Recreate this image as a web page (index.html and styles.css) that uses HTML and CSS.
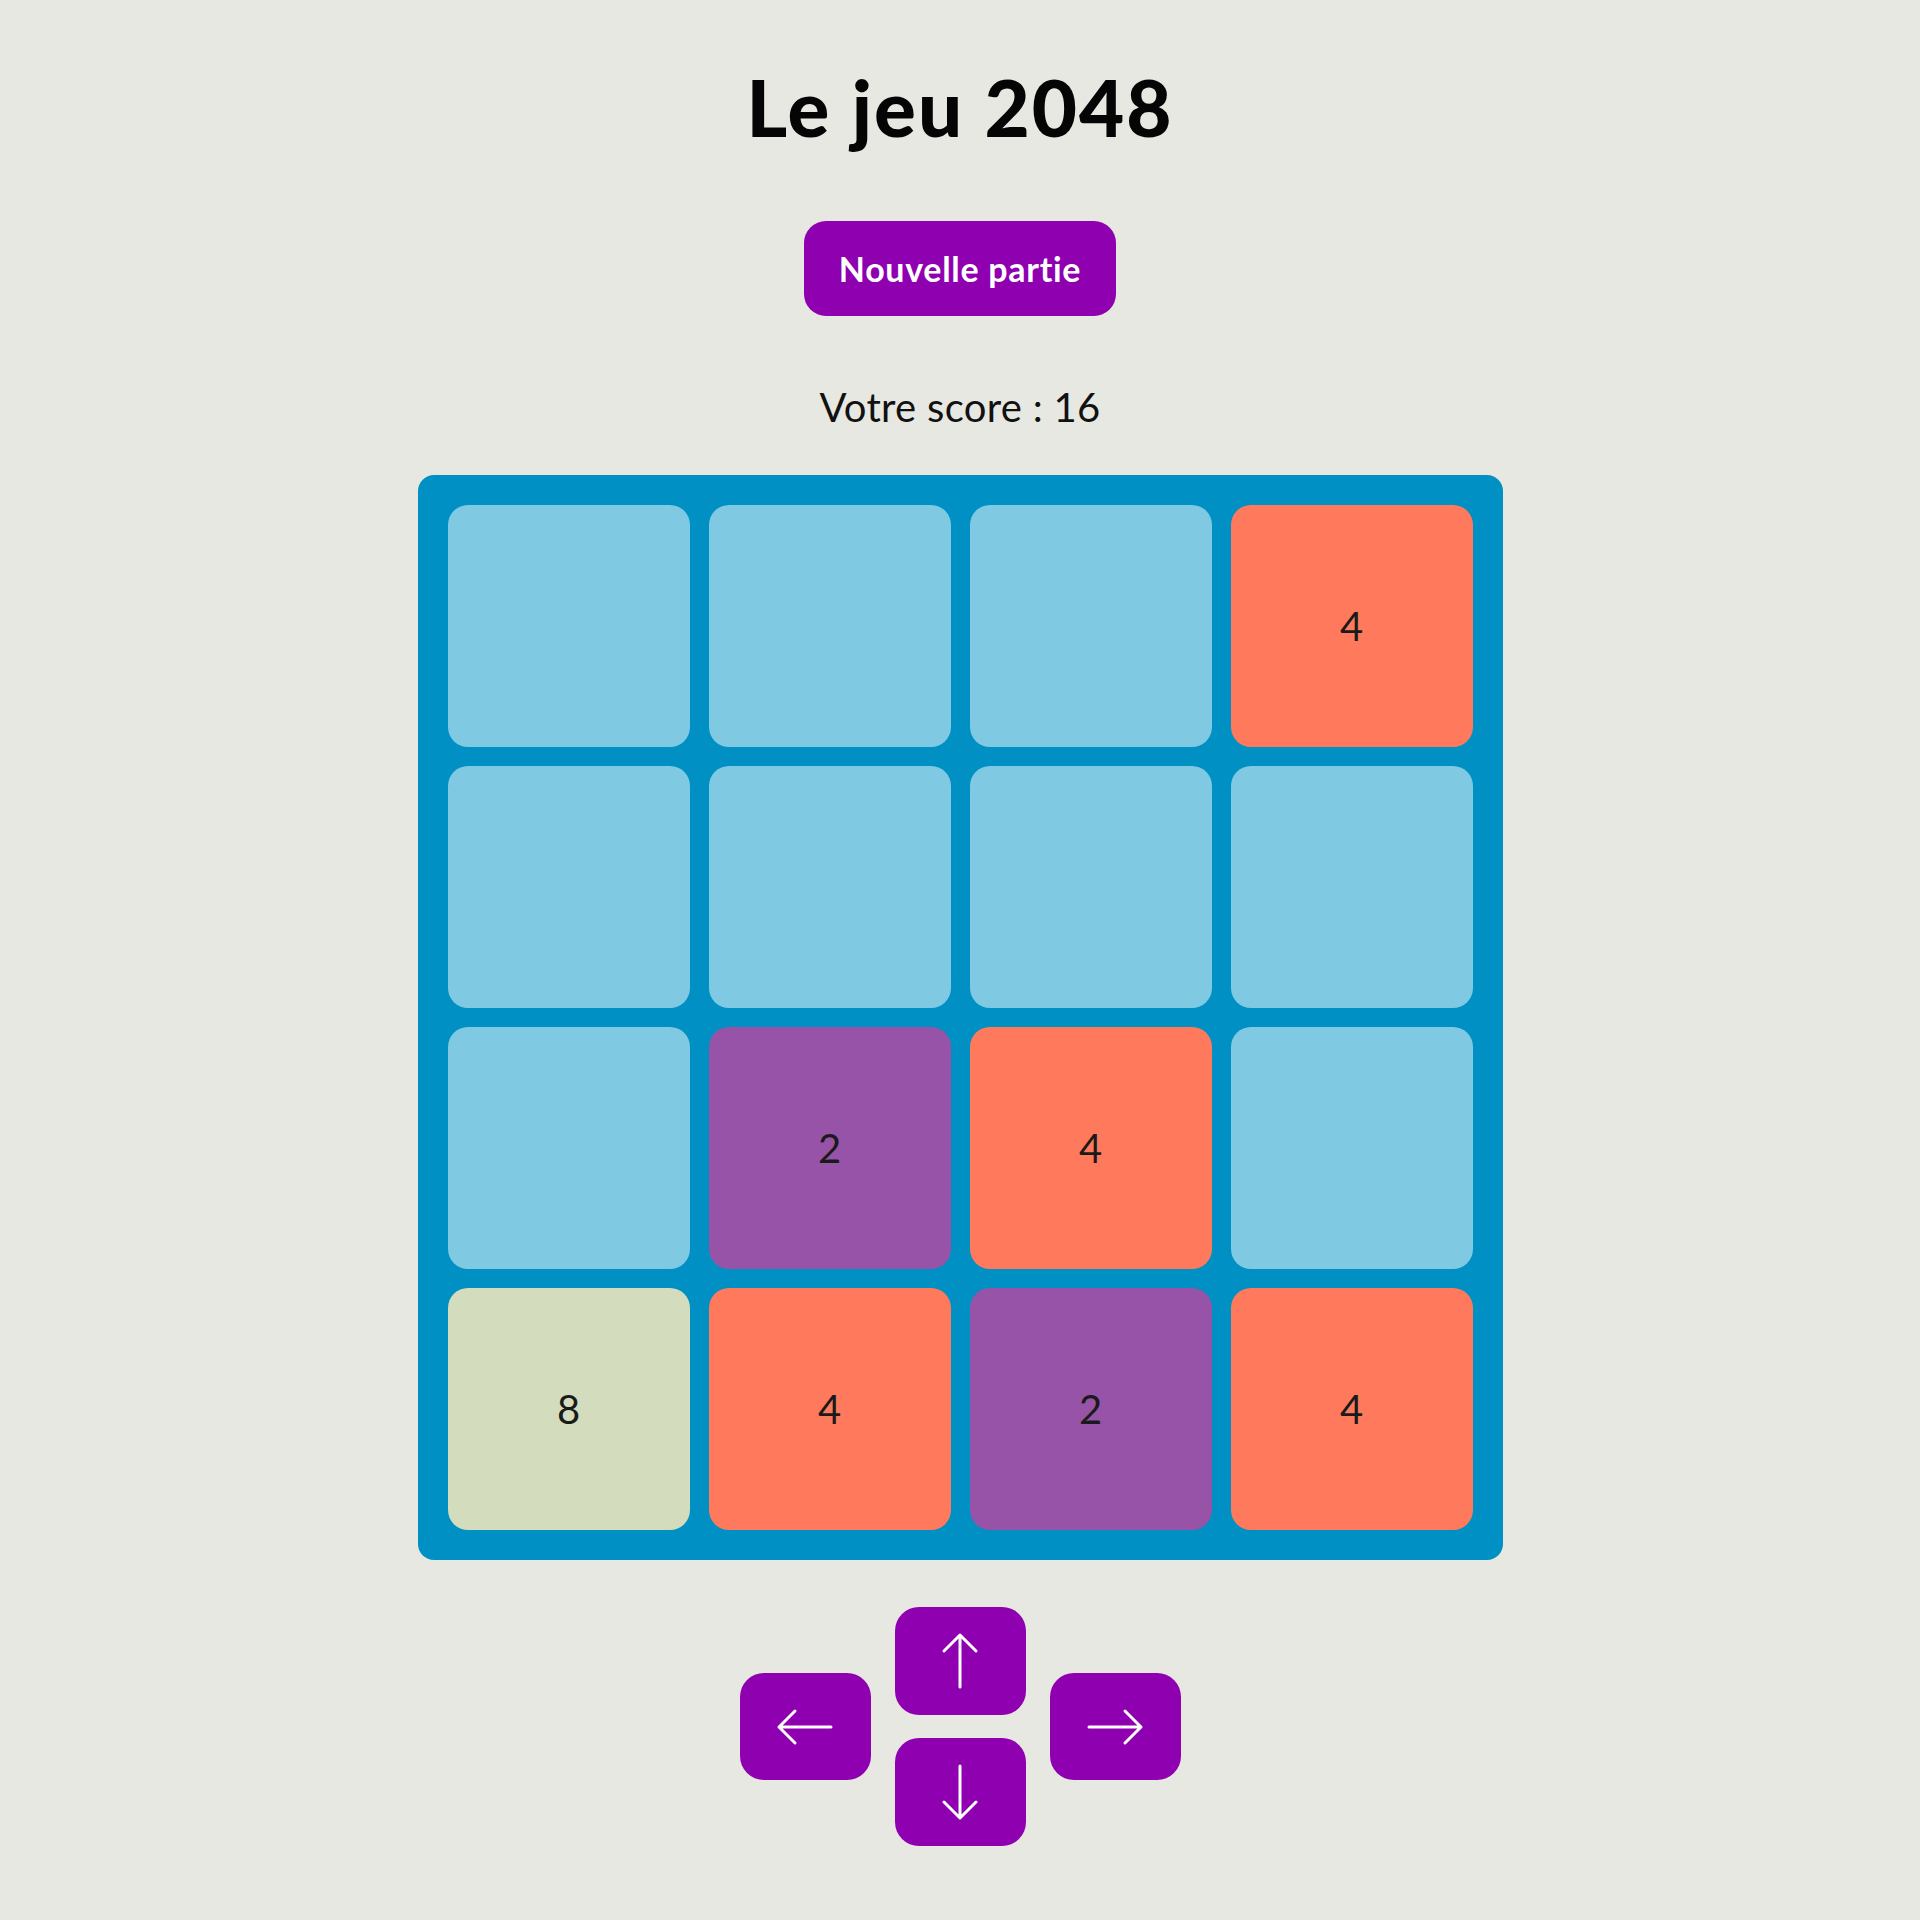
FILE: index.html
```html
<!DOCTYPE html>
<html lang="fr">
<head>
<meta charset="utf-8">
<title>Le jeu 2048</title>
<link rel="stylesheet" href="styles.css">
</head>
<body>
<main class="page">
  <h1 class="title">Le jeu 2048</h1>
  <button class="new-game">Nouvelle partie</button>
  <p class="score">Votre score : 16</p>
  <div class="board">
    <div class="tile"></div>
    <div class="tile"></div>
    <div class="tile"></div>
    <div class="tile t4">4</div>
    <div class="tile"></div>
    <div class="tile"></div>
    <div class="tile"></div>
    <div class="tile"></div>
    <div class="tile"></div>
    <div class="tile t2">2</div>
    <div class="tile t4">4</div>
    <div class="tile"></div>
    <div class="tile t8">8</div>
    <div class="tile t4">4</div>
    <div class="tile t2">2</div>
    <div class="tile t4">4</div>
  </div>
  <div class="controls">
    <button class="arrow left" aria-label="gauche"><svg viewBox="0 0 60 60" width="60" height="60"><path d="M56 30H4M20 14L4 30l16 16"/></svg></button>
    <button class="arrow up" aria-label="haut"><svg viewBox="0 0 60 60" width="60" height="60"><path d="M30 56V4M14 20L30 4l16 16"/></svg></button>
    <button class="arrow down" aria-label="bas"><svg viewBox="0 0 60 60" width="60" height="60"><path d="M30 4v52M14 40l16 16 16-16"/></svg></button>
    <button class="arrow right" aria-label="droite"><svg viewBox="0 0 60 60" width="60" height="60"><path d="M4 30h52M40 14l16 16-16 16"/></svg></button>
  </div>
</main>
</body>
</html>
```
FILE: styles.css
```css
html, body {
  margin: 0;
  padding: 0;
  background: #e7e8e1;
}
body {
  font-family: "Lato", "Open Sans", sans-serif;
  color: #111;
}
.page {
  display: flex;
  flex-direction: column;
  align-items: center;
  padding-top: 68px;
}
.title {
  margin: 0;
  font-size: 78px;
  line-height: 78px;
  font-weight: 900;
  letter-spacing: 2px;
  color: #050505;
}
.new-game {
  margin-top: 75px;
  width: 312px;
  height: 95px;
  border: none;
  border-radius: 22px;
  background: #8e00b0;
  color: #fff;
  font-family: inherit;
  font-size: 34px;
  font-weight: 700;
  letter-spacing: 0.7px;
}
.score {
  margin: 71px 0 0;
  font-size: 40px;
  line-height: 40px;
  letter-spacing: 0.3px;
}
.board {
  margin-top: 48px;
  width: 1085px;
  height: 1085px;
  box-sizing: border-box;
  padding: 30px;
  background: #0090c4;
  border-radius: 16px;
  display: grid;
  grid-template-columns: repeat(4, 242px);
  grid-template-rows: repeat(4, 242px);
  gap: 19px;
}
.tile {
  background: #7fc9e3;
  border-radius: 20px;
  display: flex;
  align-items: center;
  justify-content: center;
  font-size: 40px;
  color: #1a1a1a;
}
.t2 { background: #9753a8; }
.t4 { background: #ff7a5c; }
.t8 { background: #d3dcbc; }
.controls {
  margin-top: 47px;
  display: grid;
  grid-template-columns: repeat(3, 131px);
  grid-template-rows: 108px 108px;
  column-gap: 24px;
  row-gap: 23px;
}
.arrow {
  border: none;
  border-radius: 24px;
  background: #8e00b0;
  display: flex;
  align-items: center;
  justify-content: center;
  padding: 0;
}
.arrow svg {
  fill: none;
  stroke: #fff;
  stroke-width: 3;
  stroke-linecap: round;
  stroke-linejoin: round;
}
.arrow.left { grid-column: 1; grid-row: 1 / 3; align-self: center; height: 107px; }
.arrow.up { grid-column: 2; grid-row: 1; }
.arrow.down { grid-column: 2; grid-row: 2; }
.arrow.right { grid-column: 3; grid-row: 1 / 3; align-self: center; height: 107px; }
```
